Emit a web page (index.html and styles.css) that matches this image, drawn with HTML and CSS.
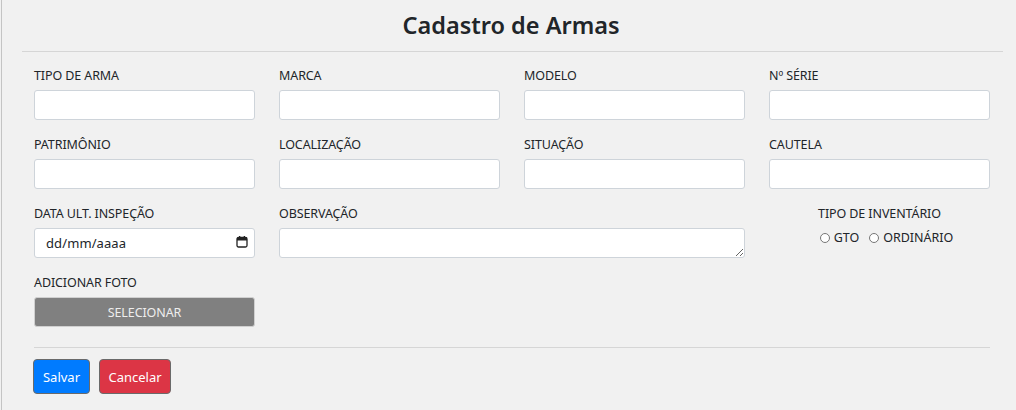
FILE: index.html
```html
<!DOCTYPE html>
<html lang="pt-BR">
<head>
<meta charset="utf-8">
<title>Cadastro de Armas</title>
<link rel="stylesheet" href="styles.css">
</head>
<body>
<div class="page">
  <h1 class="title">Cadastro de Armas</h1>
  <hr class="sep-top">
  <form class="form">
    <div class="grid">
      <div class="field"><label class="lbl">TIPO DE ARMA</label><input class="inp" type="text"></div>
      <div class="field"><label class="lbl">MARCA</label><input class="inp" type="text"></div>
      <div class="field"><label class="lbl">MODELO</label><input class="inp" type="text"></div>
      <div class="field"><label class="lbl">Nº SÉRIE</label><input class="inp" type="text"></div>

      <div class="field"><label class="lbl">PATRIMÔNIO</label><input class="inp" type="text"></div>
      <div class="field"><label class="lbl">LOCALIZAÇÃO</label><input class="inp" type="text"></div>
      <div class="field"><label class="lbl">SITUAÇÃO</label><input class="inp" type="text"></div>
      <div class="field"><label class="lbl">CAUTELA</label><input class="inp" type="text"></div>

      <div class="field"><label class="lbl">DATA ULT. INSPEÇÃO</label>
        <div class="inp date"><span>dd/mm/aaaa</span>
          <svg class="cal" width="12" height="12" viewBox="0 0 12 12"><rect x="1" y="1.5" width="10" height="9.5" rx="1.5" fill="none" stroke="#222" stroke-width="1.3"/><rect x="1" y="1.5" width="10" height="3" fill="#222"/><rect x="3" y="0" width="1.3" height="2.5" fill="#222"/><rect x="7.7" y="0" width="1.3" height="2.5" fill="#222"/></svg>
        </div>
      </div>
      <div class="field span2"><label class="lbl">OBSERVAÇÃO</label><textarea class="inp ta"></textarea></div>
      <div class="field center"><label class="lbl">TIPO DE INVENTÁRIO</label>
        <div class="radios">
          <label class="rad"><input type="radio" name="inv"> GTO</label>
          <label class="rad"><input type="radio" name="inv"> ORDINÁRIO</label>
        </div>
      </div>

      <div class="field"><label class="lbl">ADICIONAR FOTO</label><button type="button" class="btn-sel">SELECIONAR</button></div>
    </div>
    <hr class="sep-bot">
    <div class="actions">
      <button type="button" class="btn btn-blue">Salvar</button>
      <button type="button" class="btn btn-red">Cancelar</button>
    </div>
  </form>
</div>
</body>
</html>
```
FILE: styles.css
```css
html, body { margin: 0; padding: 0; }
body {
  background: #f1f1f1;
  font-family: "Noto Sans", "Open Sans", sans-serif;
  color: #212529;
  height: 410px;
  overflow: hidden;
}
.page {
  border-left: 1px solid #c4c4c4;
  margin-left: 1px;
  height: 410px;
  box-sizing: border-box;
}
.title {
  margin: 0;
  padding-top: 9px;
  height: 51px;
  box-sizing: border-box;
  text-align: center;
  font-size: 23.5px;
  font-weight: 600;
  line-height: 33px;
  color: #212529;
  padding-left: 4px;
}
.sep-top {
  margin: 0 13px 0 20px;
  border: 0;
  border-top: 1px solid #d6d6d6;
}
.form { padding: 13px 25px 0 32px; }
.grid {
  display: grid;
  grid-template-columns: repeat(4, 221px);
  column-gap: 24px;
  row-gap: 14px;
}
.field { display: flex; flex-direction: column; }
.span2 { grid-column: span 2; }
.center { align-items: center; }
.lbl {
  font-size: 12.5px;
  line-height: 22px;
  height: 22px;
  margin-bottom: 3px;
  color: #212529;
  white-space: nowrap;
  letter-spacing: -0.1px;
}
.inp {
  height: 30px;
  box-sizing: border-box;
  border: 1px solid #ced4da;
  border-radius: 3px;
  background: #fff;
  margin: 0;
  font: inherit;
  font-size: 13px;
}
.date {
  display: flex;
  align-items: center;
  justify-content: space-between;
  padding: 0 6px 0 11px;
  color: #212529;
}
.date span { letter-spacing: 0.1px; font-size: 13px; }
.cal { display: block; margin-top: -2px; }
.ta { resize: both; width: 100%; padding: 4px; }
.radios { display: flex; gap: 10px; margin-top: 1px; padding-left: 14px; }
.rad {
  font-size: 12.5px;
  line-height: 18px;
  display: flex;
  align-items: center;
  gap: 4px;
  color: #212529;
}
.rad input {
  appearance: none;
  -webkit-appearance: none;
  width: 10px;
  height: 10px;
  margin: 0;
  border: 1px solid #767676;
  border-radius: 50%;
  background: #fff;
}
.btn-sel {
  height: 30px;
  border: 1px solid #d0d0d0;
  border-radius: 3px;
  background: #808080;
  color: #eeeeee;
  font: inherit;
  font-size: 12.5px;
  letter-spacing: -0.1px;
  cursor: pointer;
}
.sep-bot {
  margin: 20px 0 0 0;
  width: 956px;
  border: 0;
  border-top: 1px solid #d6d6d6;
}
.actions { display: flex; gap: 9px; padding-top: 11px; margin-left: -1px; }
.btn {
  height: 35px;
  border: 1px solid #6a6a6a;
  border-radius: 4px;
  color: #fff;
  font: inherit;
  font-size: 13px;
  padding: 0 6px;
  cursor: pointer;
}
.btn-blue { background: #007bff; width: 57px; }
.btn-red { background: #dc3545; width: 72px; }
```
